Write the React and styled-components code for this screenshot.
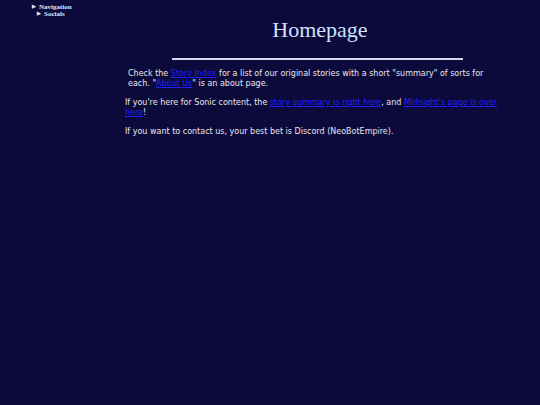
import styled, { createGlobalStyle } from "styled-components";

const GlobalStyle = createGlobalStyle`
    html, body {
        margin: 0;
        padding: 0;
        background: #0c0a3a;
    }
    body {
        min-height: 405px;
        font-family: "Liberation Serif", serif;
    }
`;

const Page = styled.div`
    display: grid;
    grid-template-columns: 125px 390px;
    min-height: 405px;
    background: #0c0a3a;
`;

const Sidebar = styled.nav`
    display: flex;
    flex-direction: column;
    padding: 3px 0 0 32px;
`;

const NavItem = styled.div`
    display: flex;
    align-items: center;
    gap: 3px;
    padding-left: ${(p) => p.$indent || 0}px;
    height: 7px;
    font-family: "Liberation Serif", serif;
    font-weight: bold;
    font-size: 7px;
    color: #e6e6f2;
`;

const Marker = styled.span`
    font-size: 5px;
    line-height: 1;
`;

const Main = styled.main`
    display: flex;
    flex-direction: column;
    padding-top: 15px;
`;

const Title = styled.h1`
    margin: 0;
    text-align: center;
    font-family: "Liberation Serif", serif;
    font-weight: normal;
    font-size: 22px;
    line-height: 30px;
    color: #cfe2ff;
`;

const Rule = styled.hr`
    width: 291px;
    height: 2px;
    margin: 13px 0 9px 47px;
    border: none;
    background: #d8d6ec;
`;

const Para = styled.p`
    width: ${(p) => 374 - (p.$pad || 0)}px;
    margin: 0 0 9px;
    padding-left: ${(p) => p.$pad || 0}px;
    font-family: "DejaVu Sans", Verdana, sans-serif;
    font-size: 8px;
    line-height: 10px;
    color: #e8e8f0;
`;

const Link = styled.a`
    color: #1f1fff;
    text-decoration: underline;
`;

export default function App() {
    return (
        <>
            <GlobalStyle />
            <Page>
                <Sidebar>
                    <NavItem>
                        <Marker>▶</Marker>Navigation
                    </NavItem>
                    <NavItem $indent={5}>
                        <Marker>▶</Marker>Socials
                    </NavItem>
                </Sidebar>
                <Main>
                    <Title>Homepage</Title>
                    <Rule />
                    <Para $pad={3}>
                        Check the <Link href="#">Story Index</Link> for a list of our original
                        stories with a short "summary" of sorts for each. "<Link href="#">About Us</Link>"
                        is an about page.
                    </Para>
                    <Para>
                        If you're here for Sonic content, the <Link href="#">story summary is right here</Link>,
                        and <Link href="#">Midnight's page is over here</Link>!
                    </Para>
                    <Para>
                        If you want to contact us, your best bet is Discord (NeoBotEmpire).
                    </Para>
                </Main>
            </Page>
        </>
    );
}
